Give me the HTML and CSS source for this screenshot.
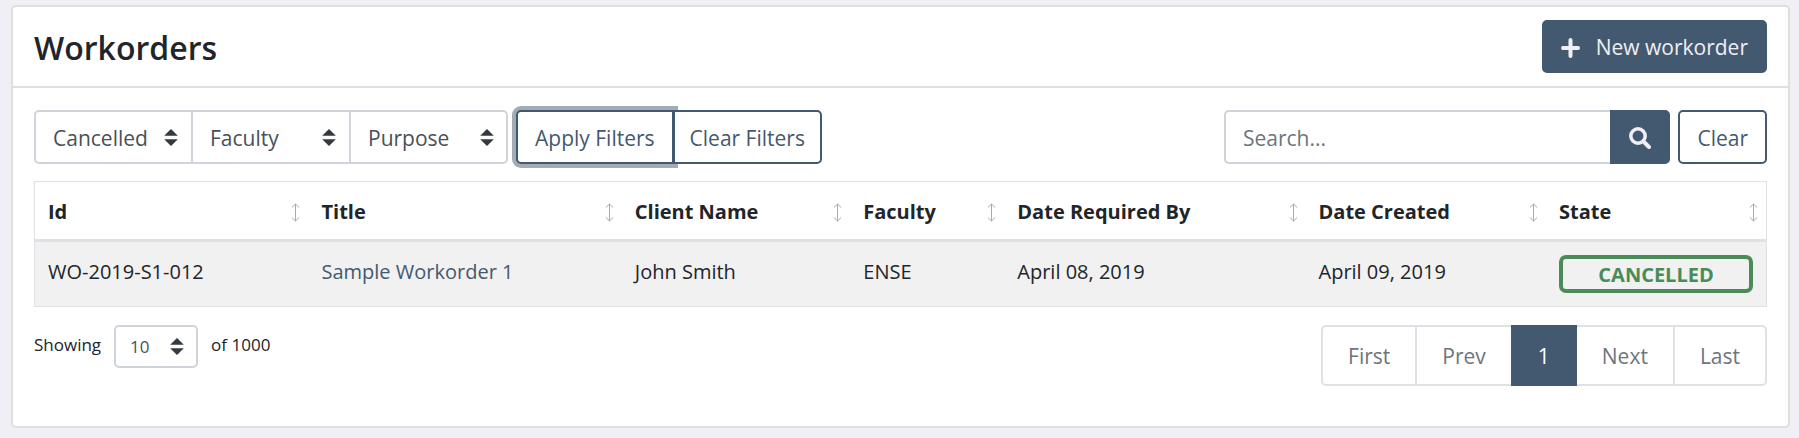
FILE: index.html
```html
<!DOCTYPE html>
<html lang="en">
<head>
<meta charset="utf-8">
<meta name="viewport" content="width=device-width, initial-scale=1">
<title>Workorders</title>
<link rel="stylesheet" href="styles.css">
</head>
<body>
<svg class="sprite" aria-hidden="true">
  <symbol id="caret" viewBox="0 0 4 5"><path d="M2 0L0 2h4zm0 5L0 3h4z"/></symbol>
  <symbol id="sort" viewBox="0 0 9 19"><path d="M4.5 1v17M.8 4.6L4.5 1l3.700 3.600M.8 14.400L4.500 18l3.700-3.600" fill="none" stroke="currentColor"/></symbol>
</svg>
<main class="card">
  <header class="card-header">
    <h1 class="title">Workorders</h1>
    <button class="btn btn-primary btn-new" type="button">
      <svg class="icon-plus" viewBox="0 0 19 20" aria-hidden="true"><path d="M9.500 2v16M2 10h15" stroke="currentColor" stroke-width="4" stroke-linecap="round"/></svg>
      <span>New workorder</span>
    </button>
  </header>
  <div class="card-body">
    <div class="toolbar">
      <div class="filters">
        <div class="select"><select aria-label="State"><option>Cancelled</option></select><svg class="caret" aria-hidden="true"><use href="#caret"/></svg></div>
        <div class="select"><select aria-label="Faculty"><option>Faculty</option></select><svg class="caret" aria-hidden="true"><use href="#caret"/></svg></div>
        <div class="select"><select aria-label="Purpose"><option>Purpose</option></select><svg class="caret" aria-hidden="true"><use href="#caret"/></svg></div>
      </div>
      <div class="btn-group">
        <button class="btn btn-outline is-focused" type="button">Apply Filters</button>
        <button class="btn btn-outline" type="button">Clear Filters</button>
      </div>
      <form class="search">
        <input class="search-input" type="text" placeholder="Search..." aria-label="Search">
        <button class="btn btn-primary btn-search" type="button" aria-label="Search">
          <svg class="icon-search" viewBox="0 0 22 22" aria-hidden="true"><circle cx="9" cy="9" r="7.200" fill="none" stroke="currentColor" stroke-width="3.500"/><path d="M15 15l5 5" stroke="currentColor" stroke-width="4" stroke-linecap="round"/></svg>
        </button>
        <button class="btn btn-outline btn-clear" type="button">Clear</button>
      </form>
    </div>
    <table class="table">
      <colgroup>
        <col class="col-id"><col class="col-title"><col class="col-client"><col class="col-faculty"><col class="col-required"><col class="col-created"><col class="col-state">
      </colgroup>
      <thead>
        <tr>
          <th><div class="head">Id<svg class="sort" aria-hidden="true"><use href="#sort"/></svg></div></th>
          <th><div class="head">Title<svg class="sort" aria-hidden="true"><use href="#sort"/></svg></div></th>
          <th><div class="head">Client Name<svg class="sort" aria-hidden="true"><use href="#sort"/></svg></div></th>
          <th><div class="head">Faculty<svg class="sort" aria-hidden="true"><use href="#sort"/></svg></div></th>
          <th><div class="head">Date Required By<svg class="sort" aria-hidden="true"><use href="#sort"/></svg></div></th>
          <th><div class="head">Date Created<svg class="sort" aria-hidden="true"><use href="#sort"/></svg></div></th>
          <th><div class="head">State<svg class="sort" aria-hidden="true"><use href="#sort"/></svg></div></th>
        </tr>
      </thead>
      <tbody>
        <tr>
          <td>WO-2019-S1-012</td>
          <td><a class="link" href="#">Sample Workorder 1</a></td>
          <td>John Smith</td>
          <td>ENSE</td>
          <td>April 08, 2019</td>
          <td>April 09, 2019</td>
          <td><span class="badge">CANCELLED</span></td>
        </tr>
      </tbody>
    </table>
    <div class="table-footer">
      <div class="showing">
        <label for="page-size">Showing</label>
        <div class="select select-small"><select id="page-size"><option>10</option></select><svg class="caret" aria-hidden="true"><use href="#caret"/></svg></div>
        <span>of 1000</span>
      </div>
      <nav class="pagination" aria-label="Pages">
        <a class="page" href="#">First</a>
        <a class="page" href="#">Prev</a>
        <a class="page is-active" href="#" aria-current="page">1</a>
        <a class="page" href="#">Next</a>
        <a class="page" href="#">Last</a>
      </nav>
    </div>
  </div>
</main>
</body>
</html>
```
FILE: styles.css
```css
:root {
  --primary: #43596f;
  --line: #dee2e6;
  --field: #ced4da;
  --card-line: #dfdfdf;
}
* { box-sizing: border-box; }
body {
  margin: 0;
  padding: 5px 9px 10px 11px;
  background: #f0eff5;
  color: #212529;
  font: 400 20px/32px "Open Sans", "Noto Sans", sans-serif;
}
button, input, select { font: inherit; margin: 0; }
.sprite { display: none; }
.card {
  background: #fff;
  border: 2px solid var(--card-line);
  border-radius: 5px;
}
.card-header {
  display: flex;
  justify-content: space-between;
  align-items: center;
  padding: 13px 21px;
  border-bottom: 2px solid var(--card-line);
}
.title { margin: 0; padding-top: 2px; font-size: 32px; line-height: 44px; font-weight: 600; }
.card-body { padding: 22px 21px 40px; }
.btn {
  display: inline-flex;
  align-items: center;
  justify-content: center;
  padding: 10px 17px 8px;
  border: 2px solid var(--primary);
  border-radius: 5px;
  white-space: nowrap;
  font-size: 21px;
  line-height: 32px;
}
.btn-primary { background: var(--primary); color: #f0eff5; }
.btn-outline { background: #fff; color: var(--primary); }
.btn-new { gap: 16px; line-height: 31px; }
.icon-plus { width: 19px; height: 20px; }
.icon-search { width: 22px; height: 22px; }
.toolbar { display: flex; font-size: 21px; }
.filters { display: flex; }
.select { display: grid; width: 158px; align-items: center; }
.select select {
  grid-area: 1 / 1;
  width: 100%;
  height: 54px;
  padding: 2px 36px 0 17px;
  appearance: none;
  background: #fff;
  color: #495057;
  border: 2px solid var(--field);
  border-radius: 5px;
}
.caret {
  grid-area: 1 / 1;
  justify-self: end;
  width: 14px;
  height: 17px;
  margin-right: 14px;
  fill: #343a40;
  pointer-events: none;
}
.filters .select:not(:first-child) select { border-left-width: 1px; border-top-left-radius: 0; border-bottom-left-radius: 0; }
.filters .select:not(:last-child) select { border-right-width: 1px; border-top-right-radius: 0; border-bottom-right-radius: 0; }
.btn-group { display: flex; margin-left: 8px; }
.btn-group .btn:first-child { border-top-right-radius: 0; border-bottom-right-radius: 0; }
.btn-group .btn:last-child { padding-left: 15px; padding-right: 15px; border-left-width: 1px; border-top-left-radius: 0; border-bottom-left-radius: 0; }
.is-focused { box-shadow: 0 0 0 4px rgba(67, 89, 111, 0.5); }
.search { display: flex; flex: 0 1 543px; margin-left: auto; }
.search-input {
  flex: 1;
  min-width: 0;
  padding: 10px 17px 8px;
  border: 2px solid var(--field);
  border-right: 0;
  border-radius: 5px 0 0 5px;
  color: #495057;
}
.search-input::placeholder { color: #6c757d; opacity: 1; }
.btn-search { border-top-left-radius: 0; border-bottom-left-radius: 0; }
.btn-clear { margin-left: 8px; }
.table {
  width: 100%;
  margin: 17px 0 18px;
  table-layout: fixed;
  border-collapse: separate;
  border-spacing: 0;
  border: 1px solid var(--line);
}
.col-id { width: 15.800%; }
.col-title { width: 18.100%; }
.col-client { width: 13.200%; }
.col-faculty { width: 8.900%; }
.col-required { width: 17.400%; }
.col-created { width: 13.900%; }
.table th { padding: 14px 8px 11px 13px; text-align: left; font-weight: 700; border-bottom: 3px solid var(--line); }
.table td { padding: 13px; vertical-align: top; background: #f1f1f1; line-height: 34px; }
.head { display: flex; justify-content: space-between; align-items: center; white-space: nowrap; }
.sort { width: 9px; height: 19px; color: #aaa; }
.link { color: var(--primary); text-decoration: none; }
.table .badge {
  display: block;
  padding-top: 2px;
  border: 4px solid #4b8b57;
  border-radius: 7px;
  color: #4b8b57;
  font-weight: 700;
  line-height: 28px;
  text-align: center;
}
.table-footer { display: flex; justify-content: space-between; align-items: flex-start; }
.showing { display: flex; gap: 13px; font-size: 17px; line-height: 40px; }
.select-small { width: 84px; }
.select-small select { height: 43px; padding: 0 32px 0 14px; }
.pagination { display: flex; font-size: 21px; }
.page {
  padding: 15px 25px 13px;
  border: 2px solid var(--line);
  color: #6c757d;
  text-decoration: none;
  line-height: 29px;
}
.page + .page { margin-left: -2px; }
.page:first-child { border-radius: 5px 0 0 5px; }
.page:last-child { border-radius: 0 5px 5px 0; }
.is-active { z-index: 1; position: relative; background: var(--primary); border-color: var(--primary); color: #fff; }
```
